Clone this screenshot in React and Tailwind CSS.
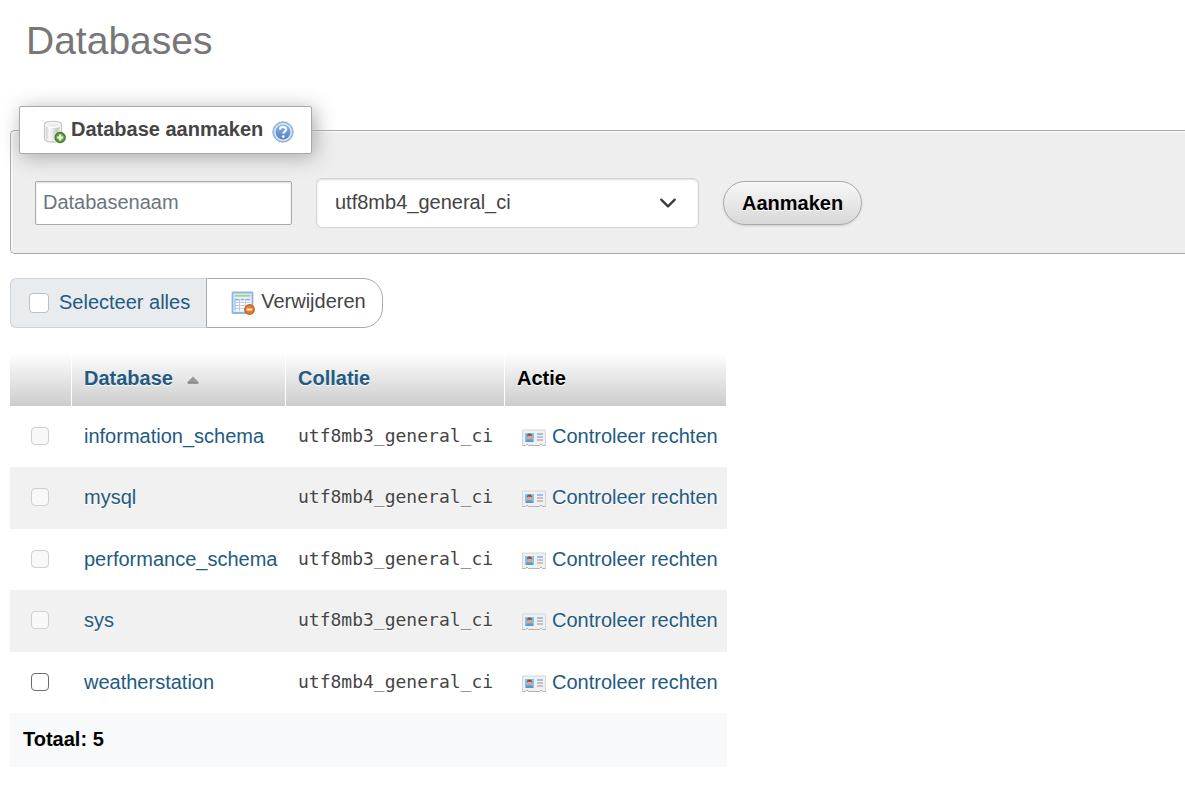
import React, { useState } from "react";

const databases = [
  { name: "information_schema", collation: "utf8mb3_general_ci", system: true },
  { name: "mysql", collation: "utf8mb4_general_ci", system: true },
  { name: "performance_schema", collation: "utf8mb3_general_ci", system: true },
  { name: "sys", collation: "utf8mb3_general_ci", system: true },
  { name: "weatherstation", collation: "utf8mb4_general_ci", system: false },
];

const collations = ["utf8mb4_general_ci", "utf8mb3_general_ci", "latin1_swedish_ci"];

function DatabaseAddIcon() {
  return (
    <svg className="h-6 w-6 shrink-0" viewBox="0 0 24 24" aria-hidden="true">
      <defs>
        <linearGradient id="cylinder" x1="0" x2="1" y1="0" y2="0">
          <stop offset="0" stopColor="#d0d0d0" />
          <stop offset="0.25" stopColor="#fafafa" />
          <stop offset="0.5" stopColor="#e6e6e6" />
          <stop offset="0.8" stopColor="#c4c4c4" />
          <stop offset="1" stopColor="#e8e8e8" />
        </linearGradient>
      </defs>
      <path d="M1.500 4.500C1.500 2.400 5 1.500 10 1.500s8.500.9 8.500 3v14c0 2.100-3.500 3.500-8.500 3.500s-8.500-1.400-8.500-3.500z" fill="#f4f4f4" stroke="#c8c8c8" strokeWidth="1.300" />
      <path d="M3 6c2 2.500 12 2.500 14 0v12c-1 3-13 3-14 0z" fill="url(#cylinder)" />
      <ellipse cx="10" cy="5" rx="7" ry="2.500" fill="#eee" stroke="#fff" />
      <circle cx="17.200" cy="17.500" r="5" fill="#67a346" stroke="#417b29" strokeWidth="1.300" />
      <path d="M17.200 14.500v6M14.200 17.500h6" stroke="#f1ffe9" strokeWidth="2.200" />
    </svg>
  );
}

function HelpIcon() {
  return (
    <svg className="h-6 w-6" viewBox="0 0 24 24" aria-hidden="true">
      <defs>
        <linearGradient id="help" x1="0" x2="0" y1="0" y2="1">
          <stop offset="0" stopColor="#8fb5e0" />
          <stop offset="1" stopColor="#4e80bd" />
        </linearGradient>
      </defs>
      <circle cx="12" cy="12" r="10.200" fill="#a4bfe0" stroke="#8cadd6" />
      <circle cx="12" cy="12" r="8.200" fill="url(#help)" stroke="#dce9f7" strokeWidth="1.400" />
      <path d="M9 9.800c0-2 1.300-3 3-3s3.100 1 3.100 2.600c0 2-2.700 2.200-2.700 4.200" fill="none" stroke="#fff" strokeWidth="2.200" />
      <circle cx="12.300" cy="16.600" r="1.400" fill="#fff" />
    </svg>
  );
}

function TableDeleteIcon() {
  return (
    <svg className="h-6 w-6 shrink-0" viewBox="0 0 24 24" aria-hidden="true">
      <rect x="1.500" y="1.500" width="20" height="20.500" rx="0.500" fill="#e4effb" stroke="#92b4e4" strokeWidth="1.800" />
      <path d="M3.500 4.700h16" stroke="#a0d48c" strokeWidth="2" />
      <path d="M4 7.500h15v12H4z" fill="#fff" />
      <path d="M4 8.700h4M9.500 8.700h4M15 8.700h4" stroke="#8fb3df" strokeWidth="1.700" />
      <path d="M4 11.500h15M4 14.500h15M4 17.500h15M8.500 8v12M14.500 8v12" stroke="#b4cdec" />
      <path d="M4 7.500v12" stroke="#8fb3df" />
      <circle cx="18.500" cy="18.500" r="4.800" fill="#e8792a" stroke="#cb5d17" strokeWidth="1.200" />
      <path d="M15.700 18.500h5.600" stroke="#fff0e3" strokeWidth="2" />
    </svg>
  );
}

function RightsIcon() {
  return (
    <svg className="mt-1 h-5 w-6 shrink-0" viewBox="0 0 24 20" aria-hidden="true">
      <path d="M.5 2h23v15.500h-3L19 16l-1.500 1.500h-11L5 16l-1.500 1.500h-3z" fill="#f0f0f0" stroke="#d6d6d6" />
      <path d="M.5 17.500h3L5 16l1.500 1.500h11L19 16l1.500 1.500h3" fill="none" stroke="#b4b4b4" />
      <rect x="3" y="5" width="9" height="9" fill="#86bcf2" />
      <path d="M4 14c0-2.500 1.500-3.200 3.500-3.200s3.500.7 3.500 3.200z" fill="#5797da" />
      <circle cx="7.500" cy="9" r="2.500" fill="#dfa97d" />
      <path d="M4.800 8.500c0-4 5.400-4 5.400 0l-1.200-.8H6z" fill="#71563c" />
      <path d="M15 6h6" stroke="#7ab3ec" strokeWidth="1.500" />
      <path d="M15 9h6M15 12h6" stroke="#b4b4b4" strokeWidth="1.400" />
    </svg>
  );
}

function SortIcon() {
  return (
    <svg className="mt-1 h-2 w-3" viewBox="0 0 12 8" aria-hidden="true">
      <path d="M6 .5 11.500 6v1.500H.5V6z" fill="#999" />
      <path d="M.8 7h10.400" stroke="#777" />
    </svg>
  );
}

const checkbox =
  "block shrink-0 appearance-none rounded-[4px] border bg-white checked:bg-[#235a81]";

export default function App() {
  const [name, setName] = useState("");
  const [collation, setCollation] = useState(collations[0]);
  const [selected, setSelected] = useState(false);

  return (
    <main className="pt-4 pb-10 pl-[10px] font-['Liberation_Sans',Arial,sans-serif] text-xl leading-[30px] text-[#444]">
      <h1 className="pl-4 text-[39px] leading-[50px] text-[#777]">Databases</h1>

      <form onSubmit={(e) => e.preventDefault()}>
        <fieldset className="mt-10 rounded-l-[5px] border border-r-0 border-[#aaa] bg-[#eee] shadow-[inset_1px_1px_2px_#fff]">
          <legend className="ml-2 flex h-12 items-center rounded-[2px] border border-[#aaa] bg-white pt-1 pr-4 pl-[23px] font-bold shadow-[3px_3px_20px_#aaa]">
            <DatabaseAddIcon />
            <span className="ml-1 pb-[6px]">Database aanmaken</span>
            <a href="#help" aria-label="Documentatie" className="ml-2">
              <HelpIcon />
            </a>
          </legend>
          <div className="flex items-center gap-6 px-6 pt-6 pb-[25px]">
            <input
              type="text"
              aria-label="Databasenaam"
              placeholder="Databasenaam"
              value={name}
              onChange={(e) => setName(e.target.value)}
              className="h-11 w-[257px] rounded-[2px] border border-[#aaa] bg-white px-[7px] pb-[2px] shadow-[inset_0_1px_2px_#ddd] placeholder:text-[#6c757d]"
            />
            <div className="relative w-[383px]">
              <select
                aria-label="Collatie"
                value={collation}
                onChange={(e) => setCollation(e.target.value)}
                className="block h-[50px] w-full appearance-none rounded-[6px] border border-[#ced4da] bg-white px-[18px] pb-[2px] shadow-[inset_0_1px_2px_#ddd]"
              >
                {collations.map((item) => (
                  <option key={item}>{item}</option>
                ))}
              </select>
              <svg
                className="pointer-events-none absolute top-4 right-[22px] h-[18px] w-[18px]"
                viewBox="0 0 16 16"
                aria-hidden="true"
              >
                <path d="m2 5 6 6 6-6" fill="none" stroke="#343a40" strokeWidth="2" strokeLinecap="round" strokeLinejoin="round" />
              </svg>
            </div>
            <button
              type="submit"
              className="h-11 rounded-full border border-[#aaa] bg-linear-to-b from-[#f8f8f8] to-[#d8d8d8] px-[18px] font-bold text-black shadow-[0_1px_2px_#ccc] [text-shadow:0_1px_0_#fff]"
            >
              Aanmaken
            </button>
          </div>
        </fieldset>
      </form>

      <div className="mt-6 flex h-[50px]">
        <label className="flex items-center rounded-l-[6px] border border-r-0 border-[#ced4da] bg-[#e9ecef] pr-4 pl-[18px] text-[#235a81]">
          <input
            type="checkbox"
            checked={selected}
            onChange={(e) => setSelected(e.target.checked)}
            className={`${checkbox} mr-[10px] h-5 w-5 border-[#bfbfbf]`}
          />
          <span className="pb-[2px]">Selecteer alles</span>
        </label>
        <button type="button" className="flex items-center rounded-r-[20px] border border-[#aaa] bg-white pr-4 pl-6">
          <TableDeleteIcon />
          <span className="ml-[6px] pb-1">Verwijderen</span>
        </button>
      </div>

      <table className="mt-[25px] border-separate border-spacing-0 text-left [text-shadow:0_1px_0_#fff]">
        <thead>
          <tr className="h-[53px] *:border-r *:border-white *:bg-linear-to-b *:from-white *:to-[#ccc] *:pb-1 *:pl-3">
            <th className="w-[62px]" aria-label="Selectie"></th>
            <th className="w-[214px]">
              <a href="#database" className="flex items-center gap-[14px] text-[#235a81]">
                Database
                <SortIcon />
              </a>
            </th>
            <th className="w-[219px]">
              <a href="#collatie" className="text-[#235a81]">Collatie</a>
            </th>
            <th className="w-[222px] text-black">Actie</th>
          </tr>
        </thead>
        <tbody>
          {databases.map((db) => (
            <tr key={db.name} className="h-[61px] *:pb-[2px] even:h-[62px] even:bg-[#f1f1f1]">
              <td className="pl-[21px]">
                <input
                  type="checkbox"
                  aria-label={db.name}
                  disabled={db.system}
                  checked={selected && !db.system}
                  onChange={(e) => setSelected(e.target.checked)}
                  className={`${checkbox} h-[18px] w-[18px] border-[#6b6b6b] disabled:border-[#d0d0d0] disabled:bg-[#f8f8f8]`}
                />
              </td>
              <td className="pl-3">
                <a href={`#${db.name}`} className="text-[#235a81]">{db.name}</a>
              </td>
              <td className="pl-3 font-['DejaVu_Sans_Mono',monospace] text-lg">{db.collation}</td>
              <td className="pl-[17px]">
                <a href={`#rechten-${db.name}`} className="flex items-center gap-[6px] whitespace-nowrap text-[#235a81]">
                  <RightsIcon />
                  Controleer rechten
                </a>
              </td>
            </tr>
          ))}
        </tbody>
        <tfoot>
          <tr className="h-[54px] bg-[#f8f9fa] text-black">
            <th colSpan={4} className="px-[13px] pb-[2px]">Totaal: 5</th>
          </tr>
        </tfoot>
      </table>
    </main>
  );
}
